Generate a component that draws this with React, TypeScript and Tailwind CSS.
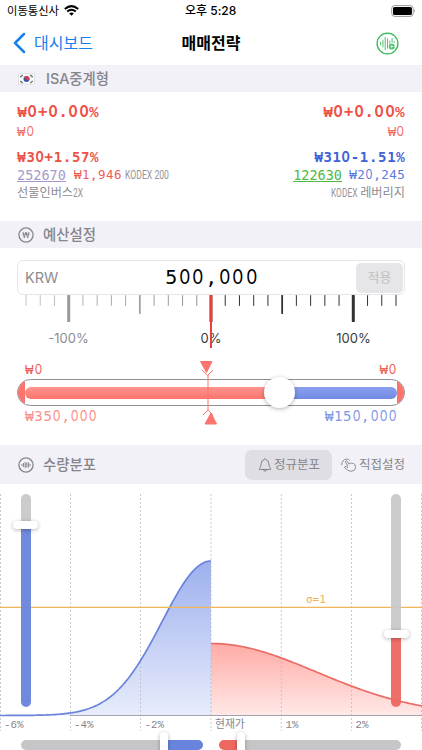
import React from "react";

const SANS = "font-['Inter','Noto_Sans_CJK_KR',sans-serif]";

/* Monospaced figures: every glyph sits in a cell `cell` pixels wide. */
function Mono({ text, cell, className = "", slashed = false }: { text: string; cell: number; className?: string; slashed?: boolean }) {
  return (
    <span className={`inline-flex items-center whitespace-nowrap font-['DejaVu_Sans_Mono',monospace] ${className}`}>
      <span className="flex translate-y-px items-baseline">
        {text.split("").map((c, i) => (
          <span key={i} style={{ width: cell }} className={`flex justify-center ${c === "0" && !slashed ? "scale-x-[.88] font-['Inter',sans-serif]" : c === "₩" || c === "%" ? "font-['Liberation_Mono',monospace]" : ""}`}>
            {c}
          </span>
        ))}
      </span>
    </span>
  );
}

function WifiIcon() {
  return (
    <svg width="15" height="11" viewBox="0 0 15 11">
      <g fill="none" stroke="#000" strokeWidth="2">
        <path d="M0.8 3.9 Q7.5 -1.7 14.2 3.9" />
        <path d="M3.2 6.6 Q7.5 3 11.8 6.6" />
      </g>
      <path d="M5.2 8.5 Q7.5 6.7 9.8 8.5 L7.5 10.8Z" />
    </svg>
  );
}

function AddWaveIcon() {
  return (
    <svg width="23" height="23" viewBox="0 0 23 23" fill="none" stroke="#34b956" strokeLinecap="round">
      <circle cx="11.5" cy="11.5" r="10.4" strokeWidth="1.3" />
      <path d="M4.6 10.2v2.6M6.9 8v7M9.2 5.3v12.4M11.5 6.8v9.4M13.8 8.8v4.2M16.1 6.5v3.8M18.2 9.4v1" strokeWidth=".85" />
      <circle cx="15.8" cy="14.6" r="3.2" fill="#34b956" stroke="#fff" strokeWidth=".5" />
      <path d="M14.3 14.6h3M15.8 13.1v3" stroke="#fff" strokeWidth=".8" />
    </svg>
  );
}

function Flag() {
  return (
    <svg width="17" height="12" viewBox="0 0 17 12">
      <path d="M.5 1.2Q4.500-.1 8.500 .7T16.500 .8V11Q12.500 12 8.500 11.200T.5 11.400Z" fill="#fbfbfc" stroke="#d2d2d8" strokeWidth=".6" />
      <circle cx="8.500" cy="6" r="3" fill="#3659a8" />
      <path d="M5.700 5A3 3 0 0 1 11.400 6.700Q10 8 8.500 6.300T5.700 5Z" fill="#dc3c50" />
      <g stroke="#444" strokeWidth="1.300" strokeDasharray="1.300 .4">
        <path d="M2.500 4.200L4.500 2M12.500 2L14.500 4.200M2.500 8L4.500 10.100M12.500 10.100L14.500 8" />
      </g>
    </svg>
  );
}

function WonIcon() {
  return (
    <svg width="16" height="16" viewBox="0 0 16 16" fill="none" stroke="#85858b">
      <circle cx="8" cy="8" r="7.100" strokeWidth="1.300" />
      <path d="M5 5l1.300 6L8 5l1.700 6L11 5M4.500 7.200h7" strokeWidth="1" />
    </svg>
  );
}

function WaveCircleIcon() {
  return (
    <svg width="16" height="16" viewBox="0 0 16 16" fill="none" stroke="#85858b">
      <circle cx="8" cy="8" r="7.100" strokeWidth="1.300" />
      <path d="M4 7.400v1.200M5.600 6.400v3.200M7.200 5.400v5.200M8.800 6v4M10.400 5.700v4.600M12 7.200v1.600" strokeWidth="1" strokeLinecap="round" />
    </svg>
  );
}

function BellIcon() {
  return (
    <svg width="14" height="14" viewBox="0 0 14 14" fill="none" stroke="#85858b" strokeWidth="1" strokeLinecap="round" strokeLinejoin="round">
      <path d="M1.200 11.100Q1 10.500 2 9.500Q3 8.500 3.200 5.700Q3.400 2.400 5.800 2Q6 .8 7 .8T8.200 2Q10.600 2.400 10.800 5.700Q11 8.500 12 9.500Q13 10.500 12.800 11.100Z" />
      <path d="M5.300 11.300Q5.500 13.200 7 13.200T8.700 11.300" />
    </svg>
  );
}

function TapIcon() {
  return (
    <svg width="16" height="14" viewBox="0 0 16 14" fill="none" stroke="#85858b" strokeWidth=".95" strokeLinecap="round" strokeLinejoin="round">
      <path d="M.7 6.800Q.9 1.800 5.300 1.100Q7.200 .9 8.400 2" />
      <path d="M6.700 8L4.500 4.200Q4.100 3.200 5 2.900T6.300 3.500L8 6.200Q8 4.700 9.300 5.500Q10 4.300 11.300 5.400Q12.700 4.700 13.600 6.300Q15.900 10.200 13.400 12.100Q10.900 14 8.200 12.900Q6.500 12.300 3.900 10.100Q2.900 9 4 8.500T6.700 9.500" />
    </svg>
  );
}

function Band({ icon, title, className, children }: { icon: React.ReactNode; title: string; className: string; children?: React.ReactNode }) {
  return (
    <div className={`flex shrink-0 items-center bg-[#f2f1f7] pl-[18px] ${className}`}>
      <span className="flex w-[17px]">{icon}</span>
      <span className="ml-[8px] text-[14.400px] font-medium text-[#85858b]">{title}</span>
      {children}
    </div>
  );
}

function Condensed({ text, width, scale }: { text: string; width: string; scale: string }) {
  return (
    <span className={`inline-block whitespace-nowrap ${width}`}>
      <span className={`inline-block origin-left font-['Roboto',sans-serif] text-[13.500px] font-normal text-[#949499] ${scale}`}>{text}</span>
    </span>
  );
}

function Ruler() {
  const ticks = Array.from({ length: 27 }, (_, i) => i - 13);
  return (
    <svg width="388" height="56" viewBox="17 295 388 56" className="block">
      {ticks.map((t) => {
        const major = t % 10 === 0;
        const mid = !major && t % 5 === 0;
        const near = Math.max(0, Math.min(1, (t + 16) / 20));
        const op = t > 0 ? 0.9 : 0.2 + near * 0.38;
        return <rect key={t} x={211 + t * 14.23 - (major ? 1.5 : mid ? 0.9 : 0.5)} y="295" width={major ? 3 : mid ? 1.8 : 1} height={major ? 27 : mid ? 19 : 11} rx=".4" fill="#1c1c1e" opacity={t === -10 ? 0.45 : op} />;
      })}
      <g fontFamily="Inter" fontSize="13" textAnchor="middle">
        <text x="68.500" y="343" fill="#8d8d91">-100%</text>
        <text x="211" y="343" fill="#3a3a3c">0%</text>
        <text x="353.500" y="343" fill="#3a3a3c">100%</text>
      </g>
      <rect x="209.500" y="295" width="3" height="27" fill="#d94b43" />
      <rect x="210" y="295" width="2" height="53" fill="#e8413a" />
    </svg>
  );
}

function curve(from: number, to: number, sigma: number, peak: number) {
  const pts: string[] = [];
  for (let x = from; x <= to; x += 2) {
    const z = (x - 211) / sigma;
    pts.push(`${x},${(715.5 - peak * Math.exp((-z * z) / 2)).toFixed(2)}`);
  }
  return pts.join(" ");
}

function Chart() {
  const left = curve(-1, 211, 49, 154.5);
  const right = curve(211, 423, 105, 72);
  return (
    <svg width="422" height="266" viewBox="0 484 422 266" className="block">
      <defs>
        <linearGradient id="buy" x1="0" y1="0" x2="0" y2="1">
          <stop offset="0" stopColor="#9db0ee" />
          <stop offset="1" stopColor="#e8ecfb" />
        </linearGradient>
        <linearGradient id="sell" x1="0" y1="0" x2="0" y2="1">
          <stop offset="0" stopColor="#ffaba5" />
          <stop offset="1" stopColor="#ffe9e7" />
        </linearGradient>
      </defs>
      <polygon points={`${left} 211,715.5 -1,715.5`} fill="url(#buy)" />
      <polygon points={`${right} 423,715.5 211,715.5`} fill="url(#sell)" />
      <g stroke="#b8b8bd" strokeOpacity=".75" strokeDasharray="2 2">
        {[0.5, 70.5, 140.5, 211, 281.3, 351.5, 421.5].map((x) => (
          <path key={x} d={`M${x} 494V731`} />
        ))}
      </g>
      <polyline points={left} fill="none" stroke="#6984da" strokeWidth="1.700" />
      <polyline points={right} fill="none" stroke="#ec6c66" strokeWidth="1.700" />
      <path d="M70 715.500H422" stroke="#a3a3ad" />
      <path d="M0 607.300H422" stroke="#f0b659" strokeWidth="1.200" />
      <text x="306" y="603" fontSize="11" fill="#f0b260" fontFamily="DejaVu Sans Mono">σ=1</text>
      <g fontFamily="Liberation Mono" fontSize="10.800" fill="#85858b">
        <text x="4" y="728">-6%</text>
        <text x="74" y="728">-4%</text>
        <text x="144.500" y="728">-2%</text>
        <text x="285.500" y="728">1%</text>
        <text x="355.500" y="728">2%</text>
        <text x="215" y="727.500" fontFamily="Noto Sans CJK KR">현재가</text>
      </g>
    </svg>
  );
}

const KNOB = "absolute rounded-full bg-white shadow-[0_1px_4px_rgba(0,0,0,0.3)]";

export default function App() {
  return (
    <div className={`flex h-[750px] w-[422px] flex-col overflow-hidden bg-white ${SANS}`}>
      <div className="relative flex h-[21px] shrink-0 items-center pl-[7px] pr-[6px]">
        <span className="pt-px text-[11.300px]">이동통신사</span>
        <span className="ml-[5px]"><WifiIcon /></span>
        <span className="absolute left-[185px] top-[2px] text-[12px] font-medium">오후 5:28</span>
        <svg width="25" height="12" viewBox="0 0 25 12" className="ml-auto">
          <rect x=".7" y=".6" width="21.500" height="10.800" rx="3" fill="none" stroke="#999" />
          <rect x="2" y="2" width="18.900" height="8" rx="1.600" />
          <path d="M23.200 4Q24.800 6 23.200 8Z" fill="#999" />
        </svg>
      </div>
      <div className="grid h-[44px] shrink-0 grid-cols-3 items-center px-[12px]">
        <div className="flex items-center text-[#1680ed]">
          <svg width="14" height="22" viewBox="0 0 14 22" fill="none" stroke="currentColor" strokeWidth="2.500" strokeLinecap="round" strokeLinejoin="round"><path d="M12 2L3 11l9 9" /></svg>
          <span className="ml-[8px] text-[16px]">대시보드</span>
        </div>
        <span className="text-center text-[16px] font-semibold">매매전략</span>
        <span className="flex justify-end pr-[11px]"><AddWaveIcon /></span>
      </div>
      <Band icon={<Flag />} title="ISA중계형" className="h-[27px] [&>span:last-child]:ml-[11px]" />

      <div className="flex h-[129px] shrink-0 justify-between px-[17px] pt-[10px]">
        <div className="flex flex-col items-start">
          <Mono text="₩0+0.00%" cell={10.25} className="h-[20px] text-[15.500px] font-bold text-[#ee5249]" />
          <Mono text="₩0" cell={8.6} className="h-[18px] text-[13.500px] text-[#f07069]" />
          <Mono text="₩30+1.57%" cell={9.1} className="mt-[7px] h-[18px] text-[14px] font-bold text-[#ee5249]" />
          <div className="flex h-[19px] items-center">
            <Mono text="252670" cell={8.15} slashed className="h-[14px] border-b border-[#a79acb] text-[13.500px] text-[#a79acb]" />
            <Mono text="₩1,946" cell={8} className="ml-[8px] mr-[3px] text-[12.500px] text-[#ee5d55]" />
            <span className="-mt-[4px]"><Condensed text="KODEX 200" width="w-[44px]" scale="scale-x-[.64]" /></span>
          </div>
          <div className="flex h-[18px] items-center text-[12.200px] text-[#8c8c91]">
            선물인버스<span className="-mt-[2px]"><Condensed text="2X" width="w-[12px]" scale="scale-x-[.62]" /></span>
          </div>
        </div>
        <div className="flex flex-col items-end">
          <Mono text="₩0+0.00%" cell={10.25} className="h-[20px] text-[15.500px] font-bold text-[#ee5249]" />
          <Mono text="₩0" cell={8.6} className="h-[18px] text-[13.500px] text-[#f07069]" />
          <Mono text="₩310-1.51%" cell={9.1} className="mt-[7px] h-[18px] text-[14px] font-bold text-[#3f62d8]" />
          <div className="flex h-[19px] items-center">
            <Mono text="122630" cell={8.15} slashed className="h-[14px] border-b border-[#4fb942] text-[13.500px] text-[#4fb942]" />
            <Mono text="₩20,245" cell={8} className="ml-[7px] text-[12.500px] text-[#5b79dc]" />
          </div>
          <div className="flex h-[18px] items-center text-[12.200px] text-[#8c8c91]">
            <span className="-mt-[2px]"><Condensed text="KODEX" width="w-[29px]" scale="scale-x-[.62]" /></span>레버리지
          </div>
        </div>
      </div>

      <Band icon={<WonIcon />} title="예산설정" className="h-[27px]" />

      <div className="h-[197px] shrink-0 px-[17px] pt-[12px]">
        <div className="relative flex h-[35px] items-center justify-between rounded-[6px] border border-[#e6e6e8] pl-[7px] pr-[1px]">
          <span className="text-[14.500px] text-[#8d8d91]">KRW</span>
          <span className="absolute left-[146.500px] top-0 flex"><Mono text="500,000" cell={13.4} className="text-[20px] leading-[31px] text-black" /></span>
          <button className="h-[30px] w-[47px] rounded-[5px] bg-[#e6e6e8] text-[13px] text-[#c0c0c4]">적용</button>
        </div>
        <Ruler />
        <div className="mt-[10px] flex h-[17px] items-center justify-between px-[8px] text-[#ec5e56]">
          <Mono text="₩0" cell={8.8} className="text-[13.500px]" />
          <Mono text="₩0" cell={8.8} className="text-[13.500px]" />
        </div>
        <div className="relative mt-[1px] flex h-[27px] items-center overflow-visible rounded-full">
          <div className="flex h-full w-full items-center overflow-hidden rounded-full border border-[#8e8e93] bg-white">
            <div className="h-full w-[7px] bg-[#fb756e]" />
            <div className="flex h-[12px] flex-1 overflow-hidden rounded-full">
              <div className="w-[255px] bg-linear-to-b from-[#ff938d] to-[#fb756e]" />
              <div className="flex-1 bg-linear-to-b from-[#8aa0f0] to-[#708be2]" />
            </div>
            <div className="h-full w-[7px] bg-[#fb756e]" />
          </div>
          <svg className="absolute left-[181px] top-[-18px]" width="22" height="64" viewBox="0 0 22 64" fill="#fb756e" stroke="#fb756e">
            <path d="M2.500 .5H14L8.500 11.500Z" />
            <path d="M7 63H18.500L13 52Z" />
            <path d="M4 9l5.500 5.500L15 9M10 14V49M5 54l5-5 5 5" fill="none" />
          </svg>
          <div className={`${KNOB} left-[247px] top-[-2px] size-[31px]`} />
        </div>
        <div className="flex h-[20px] items-center justify-between px-[8px]">
          <Mono text="₩350,000" cell={9.05} className="-mt-[2px] text-[14px] text-[#fd8f88]" />
          <Mono text="₩150,000" cell={9.05} className="-mt-[2px] text-[14px] text-[#8298e6]" />
        </div>
      </div>

      <Band icon={<WaveCircleIcon />} title="수량분포" className="h-[39px]">
        <div className="ml-auto flex items-center pr-[17px] text-[12.500px] text-[#85858b]">
          <div className="flex h-[30px] w-[87px] items-center gap-[2px] rounded-[7px] bg-[#dfdee4] pl-[13px]"><BellIcon /><span className="pt-px">정규분포</span></div>
          <div className="ml-[9px] flex items-center gap-[2px]"><TapIcon /><span className="pt-px">직접설정</span></div>
        </div>
      </Band>

      <div className="relative h-[266px] shrink-0">
        <Chart />
        <div className="absolute left-[21px] top-[10px] h-[213px] w-[10px] rounded-full bg-linear-to-b from-[#c9c9cb] from-[15%] to-[#6884dc] to-[15%] opacity-95" />
        <div className={`${KNOB} left-[13px] top-[37px] h-[8px] w-[25px]`} />
        <div className="absolute left-[391px] top-[10px] h-[213px] w-[10px] rounded-full bg-linear-to-b from-[#c9c9cb] from-[66%] to-[#ec6861] to-[66%] opacity-95" />
        <div className={`${KNOB} left-[384px] top-[146px] h-[8px] w-[25px]`} />
        <div className="absolute left-[21px] top-[256px] flex h-[10px] w-[182px] overflow-hidden rounded-full">
          <div className="w-[143px] bg-[#c6c6c8]" />
          <div className="flex-1 bg-[#6884dc]" />
        </div>
        <div className={`${KNOB} left-[160px] top-[248px] h-[26px] w-[8px]`} />
        <div className="absolute left-[219px] top-[256px] flex h-[10px] w-[182px] overflow-hidden rounded-full">
          <div className="w-[22px] bg-[#ec6861]" />
          <div className="flex-1 bg-[#c6c6c8]" />
        </div>
        <div className={`${KNOB} left-[237px] top-[248px] h-[26px] w-[8px]`} />
      </div>
    </div>
  );
}
